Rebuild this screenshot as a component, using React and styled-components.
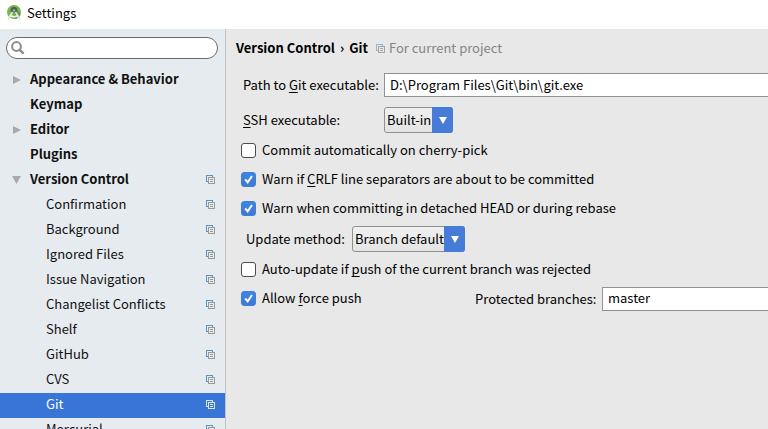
import React, { useState } from "react";
import styled, { createGlobalStyle } from "styled-components";

const GlobalStyle = createGlobalStyle`
  *, *::before, *::after { box-sizing: border-box; }
  body { margin: 0; overflow: hidden; }
  body, input, select, button {
    font-family: "Noto Sans CJK SC", "Noto Sans", sans-serif;
    font-size: 13px;
    line-height: 20px;
    color: #000;
  }
`;

const Window = styled.div`
  display: flex;
  flex-direction: column;
  height: 100vh;
  background: #e8e8e8;
`;

const TitleBar = styled.header`
  display: flex;
  align-items: center;
  flex: none;
  gap: 6px;
  height: 29px;
  padding: 0 6px 3px;
  background: #fff;
  color: #000;
`;

const Body = styled.div`
  display: flex;
  flex: 1;
  min-height: 0;
`;

const Sidebar = styled.nav`
  flex: none;
  width: 226px;
  overflow: hidden;
  background: #e6ebef;
  border-right: 1px solid #c0c3c6;
`;

const SearchBox = styled.label`
  display: flex;
  align-items: center;
  gap: 4px;
  height: 22px;
  margin: 8px 7px 9px 6px;
  padding: 0 8px 0 4px;
  background: #fff;
  border: 1px solid #6b6b6b;
  border-radius: 11px;
`;

const SearchInput = styled.input`
  flex: 1;
  min-width: 0;
  padding: 0;
  border: 0;
  outline: 0;
  background: transparent;
`;

const Tree = styled.ul`
  margin: 0;
  padding: 0;
  list-style: none;
`;

const TreeRow = styled.button`
  display: flex;
  align-items: center;
  width: 100%;
  height: 25px;
  padding: 0 10px 2px ${(p) => (p.$child ? 46 : 12)}px;
  border: 0;
  text-align: left;
  font-weight: ${(p) => (p.$child ? 400 : 700)};
  color: ${(p) => (p.$selected ? "#fff" : "#111")};
  background: ${(p) => (p.$selected ? "#3875d7" : "transparent")};
`;

const ArrowSlot = styled.span`
  display: flex;
  flex: none;
  width: 18px;
`;

const RowText = styled.span`
  flex: 1;
  padding-bottom: 1px;
  white-space: nowrap;
`;

const Content = styled.main`
  flex: 1;
  min-width: 0;
  overflow: hidden;
  padding-left: 10px;
`;

const Heading = styled.div`
  display: flex;
  align-items: center;
  height: 38px;
  margin-bottom: 6px;
  white-space: nowrap;
`;

const Crumbs = styled.h1`
  margin: 0 8px 0 0;
  font-size: 13px;
  font-weight: 700;
  color: #000;
`;

const Separator = styled.span`
  margin: 0 5px;
`;

const Scope = styled.span`
  display: flex;
  align-items: center;
  gap: 4px;
  color: #858585;
`;

const Form = styled.form`
  display: flex;
  flex-direction: column;
  gap: 3px;
  padding-left: 5px;
`;

const FieldGrid = styled.div`
  display: grid;
  grid-template-columns: 141px 1fr;
  row-gap: 10px;
  align-items: center;
  padding-left: 2px;
`;

const FieldLabel = styled.label`
  white-space: nowrap;
`;

const Line = styled.div`
  display: flex;
  align-items: center;
`;

const MethodLabel = styled(FieldLabel)`
  width: 106px;
  margin-left: 5px;
`;

const CheckLine = styled(Line)`
  height: 29px;
`;

const ProtectedLabel = styled(FieldLabel)`
  width: 127px;
`;

const TextField = styled.input`
  flex: 1;
  min-width: 0;
  height: 24px;
  padding: 0 5px 2px;
  background: #fff;
  border: 1px solid #919191;
  border-right: 0;
  border-radius: 0;
  outline: 0;
`;

const SelectFrame = styled.div`
  display: grid;
  width: ${(p) => p.$width}px;
  height: 26px;
`;

const SelectBox = styled.select`
  grid-area: 1 / 1;
  appearance: none;
  padding: 0 0 0 2px;
  background: linear-gradient(#f0f0f0, #e4e4e4);
  border: 1px solid #8f8f8f;
  border-radius: 3px;
  outline: 0;
`;

const SelectArrow = styled.span`
  grid-area: 1 / 1;
  justify-self: end;
  display: flex;
  align-items: center;
  justify-content: center;
  width: 21px;
  background: #467cd8;
  border-radius: 0 3px 3px 0;
  pointer-events: none;
`;

const CheckLabel = styled.label`
  display: flex;
  align-items: center;
  gap: 6px;
  white-space: nowrap;
  width: ${(p) => (p.$wide ? "234px" : "auto")};
`;

const CheckText = styled.span`
  padding-bottom: 1px;
`;

const Tick = styled.span`
  display: grid;
  width: 15px;
  height: 15px;
  svg { grid-area: 1 / 1; pointer-events: none; }
`;

const TickBox = styled.input`
  grid-area: 1 / 1;
  appearance: none;
  width: 15px;
  height: 15px;
  margin: 0;
  background: #fff;
  border: 1px solid #4d4d4d;
  border-radius: 3px;
  &:checked {
    border-color: #3f7fdc;
    background: linear-gradient(#3b86e4, #4378cf);
  }
`;

const Key = styled.u`
  text-underline-offset: 2px;
  text-decoration-thickness: 1px;
  text-decoration-skip-ink: none;
`;

const StudioLogo = () => (
  <svg width="15" height="18" viewBox="0 0 15 18" aria-hidden="true">
    <circle cx="8" cy="8" r="7" fill="#78b84a" />
    <path d="M8 2.5 14.5 10A7 7 0 0 1 9 15Z" fill="#5f9a43" />
    <path d="M4.7 6a3.3 3.3 0 0 1 6.6 0v2.5H4.7Z" fill="#4e5f58" />
    <path d="M6.5 8 2 15.5M9.5 8 14 15.5" stroke="#dfe2dc" strokeWidth="1.8" fill="none" />
    <path d="M4 11.5q4 2.5 8 0" stroke="#f2f3f1" strokeWidth="1.5" fill="none" />
    <circle cx="8" cy="6.5" r="1.2" fill="#a9b5b0" />
  </svg>
);

const SearchIcon = () => (
  <svg width="15" height="15" viewBox="0 0 15 15" fill="none" stroke="#8c8c8c" aria-hidden="true">
    <circle cx="5.5" cy="5.5" r="4.4" strokeWidth="2" />
    <path d="m8.6 8.6 4 4" strokeWidth="2.4" />
  </svg>
);

const ProjectIcon = ({ selected, soft }) => {
  const back = selected ? "#d5e2f6" : soft ? "#8fb9d2" : "#5598bd";
  const front = selected ? "#e3e3e3" : soft ? "#a5a5a5" : "#9a9a9a";
  return (
    <svg width="9" height="9" viewBox="0 0 9 9" fill="none" shapeRendering="crispEdges" aria-hidden="true">
      <path d="M2 6.5H.5V.5h6V2" stroke={back} />
      <path d="M2.5 2.5h6v6h-6zM4 4.5h3M4 6.5h3" stroke={front} />
    </svg>
  );
};

const TreeArrow = ({ open }) => (
  <svg width="9" height="8" viewBox="0 0 9 8" fill="#a9a9a9" aria-hidden="true">
    <path d={open ? "M0 0h9L4.5 8z" : "M1 0 9 4 1 8z"} />
  </svg>
);

const sections = [
  { name: "Appearance & Behavior", arrow: "closed" },
  { name: "Keymap" },
  { name: "Editor", arrow: "closed" },
  { name: "Plugins" },
  { name: "Version Control", arrow: "open", project: true },
  ...[
    "Confirmation", "Background", "Ignored Files", "Issue Navigation",
    "Changelist Conflicts", "Shelf", "GitHub", "CVS", "Git", "Mercurial",
  ].map((name) => ({ name, child: true, project: true })),
];

function Check({ children, initial = false, wide }) {
  const [on, setOn] = useState(initial);
  return (
    <CheckLabel $wide={wide}>
      <Tick>
        <TickBox type="checkbox" checked={on} onChange={(e) => setOn(e.target.checked)} />
        {on && (
          <svg width="15" height="15" viewBox="0 0 15 15" fill="none" aria-hidden="true">
            <path d="m4.2 7.3 2.5 3L11 4" stroke="#fff" strokeWidth="2" />
          </svg>
        )}
      </Tick>
      <CheckText>{children}</CheckText>
    </CheckLabel>
  );
}

function Dropdown({ id, width, options }) {
  return (
    <SelectFrame $width={width}>
      <SelectBox id={id}>
        {options.map((o) => <option key={o}>{o}</option>)}
      </SelectBox>
      <SelectArrow>
        <svg width="8" height="7" viewBox="0 0 8 7" fill="#fff" aria-hidden="true">
          <path d="M0 0h8L4 7z" />
        </svg>
      </SelectArrow>
    </SelectFrame>
  );
}

export default function App() {
  const [selected, setSelected] = useState("Git");
  return (
    <Window>
      <GlobalStyle />
      <TitleBar><StudioLogo />Settings</TitleBar>
      <Body>
        <Sidebar>
          <SearchBox>
            <SearchIcon />
            <SearchInput type="text" aria-label="Search settings" />
          </SearchBox>
          <Tree>
            {sections.map((s) => (
              <li key={s.name}>
                <TreeRow
                  type="button"
                  $child={s.child}
                  $selected={s.name === selected}
                  onClick={() => setSelected(s.name)}
                >
                  {!s.child && <ArrowSlot>{s.arrow && <TreeArrow open={s.arrow === "open"} />}</ArrowSlot>}
                  <RowText>{s.name}</RowText>
                  {s.project && <ProjectIcon selected={s.name === selected} />}
                </TreeRow>
              </li>
            ))}
          </Tree>
        </Sidebar>
        <Content>
          <Heading>
            <Crumbs>Version Control<Separator>›</Separator>Git</Crumbs>
            <Scope><ProjectIcon soft />For current project</Scope>
          </Heading>
          <Form onSubmit={(e) => e.preventDefault()}>
            <FieldGrid>
              <FieldLabel htmlFor="git-path">Path to <Key>G</Key>it executable:</FieldLabel>
              <TextField id="git-path" type="text" defaultValue={"D:\\Program Files\\Git\\bin\\git.exe"} />
              <FieldLabel htmlFor="ssh"><Key>S</Key>SH executable:</FieldLabel>
              <Dropdown id="ssh" width={69} options={["Built-in", "Native"]} />
            </FieldGrid>
            <div>
              <CheckLine><Check>Commit automatically on cherry-pick</Check></CheckLine>
              <CheckLine><Check initial>Warn if <Key>C</Key>RLF line separators are about to be committed</Check></CheckLine>
              <CheckLine><Check initial>Warn when committing in detached HEAD or during rebase</Check></CheckLine>
            </div>
            <Line>
              <MethodLabel htmlFor="method">Update method:</MethodLabel>
              <Dropdown id="method" width={113} options={["Branch default", "Merge", "Rebase"]} />
            </Line>
            <div>
              <CheckLine><Check>Auto-update if <Key>p</Key>ush of the current branch was rejected</Check></CheckLine>
              <CheckLine>
                <Check initial wide>Allow <Key>f</Key>orce push</Check>
                <ProtectedLabel htmlFor="protected">Protected branches:</ProtectedLabel>
                <TextField id="protected" type="text" defaultValue="master" />
              </CheckLine>
            </div>
          </Form>
        </Content>
      </Body>
    </Window>
  );
}
